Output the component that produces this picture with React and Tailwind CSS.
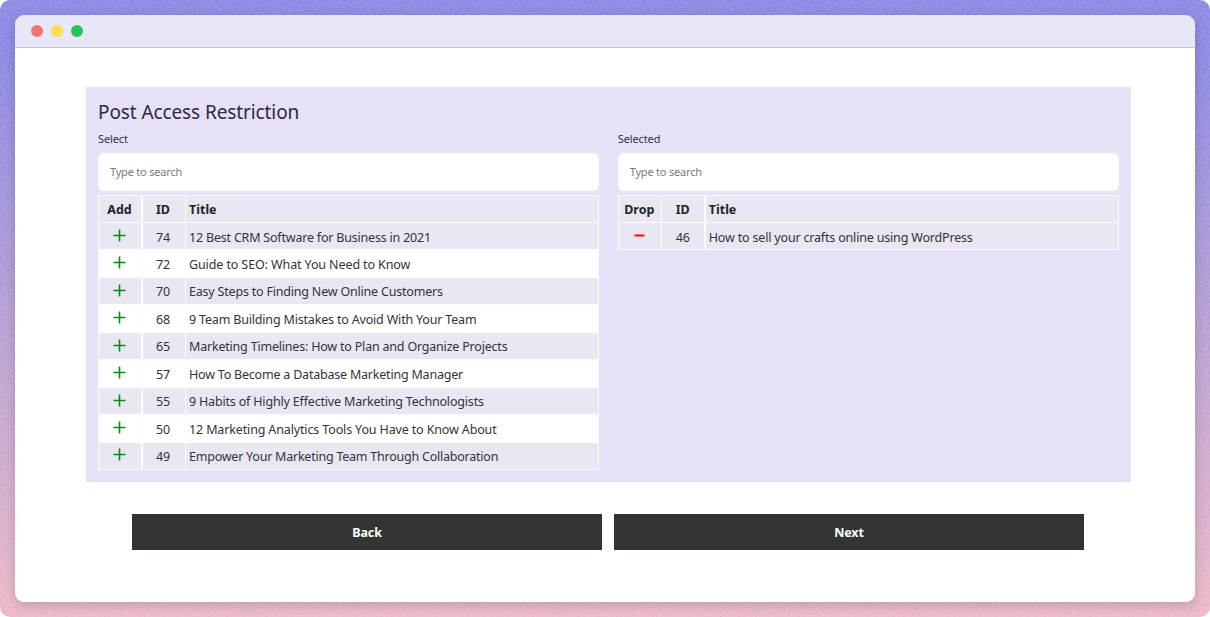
const posts = [
  { id: 74, title: '12 Best CRM Software for Business in 2021', tracking: 'tracking-[-0.2px]' },
  { id: 72, title: 'Guide to SEO: What You Need to Know', tracking: 'tracking-[-0.11px]' },
  { id: 70, title: 'Easy Steps to Finding New Online Customers', tracking: 'tracking-[-0.2px]' },
  { id: 68, title: '9 Team Building Mistakes to Avoid With Your Team', tracking: 'tracking-[-0.18px]' },
  { id: 65, title: 'Marketing Timelines: How to Plan and Organize Projects', tracking: 'tracking-[-0.2px]' },
  { id: 57, title: 'How To Become a Database Marketing Manager', tracking: 'tracking-[-0.21px]' },
  { id: 55, title: '9 Habits of Highly Effective Marketing Technologists', tracking: 'tracking-[-0.18px]' },
  { id: 50, title: '12 Marketing Analytics Tools You Have to Know About', tracking: 'tracking-[-0.14px]' },
  { id: 49, title: 'Empower Your Marketing Team Through Collaboration', tracking: 'tracking-[-0.23px]' },
];

const selectedPosts = [
  { id: 46, title: 'How to sell your crafts online using WordPress', tracking: 'tracking-[-0.18px]' },
];

function ActionIcon({ drop }) {
  return drop ? (
    <svg className="mb-[2px] mr-[1px] h-[13px] w-[13px]" viewBox="0 0 13 13" aria-hidden="true">
      <path d="M1.5 6.5H11.5" stroke="#ff0808" strokeWidth="2" />
    </svg>
  ) : (
    <svg className="mb-[2px] mr-[1px] h-[13px] w-[13px]" viewBox="0 0 13 13" aria-hidden="true">
      <path d="M0.5 6.5H12.5M6.5 0.5V12.5" stroke="#088a12" strokeWidth="1.6" />
    </svg>
  );
}

function PostTable({ label, action, rows, drop }) {
  return (
    <section className="w-[501px]">
      <div className="h-[22px] text-[11px] leading-[16px] tracking-[-0.12px] text-[#35324a]">{label}</div>
      <input
        className="block h-[38px] w-full rounded-[6px] bg-white px-3 pb-[2px] text-[11px] tracking-[-0.2px] text-[#333] placeholder-[#777a80] outline-none"
        placeholder="Type to search"
      />
      <div className="mt-1 grid grid-cols-[42px_42px_1fr] gap-x-[1.5px] gap-y-[1.44px] bg-[#fcfbfe] p-px text-[12.5px] text-[#33333b]">
        <div className="flex h-[26px] items-center justify-center bg-[#e9e7f2] pr-px pt-[2px] font-bold text-[#212529]">{action}</div>
        <div className="flex h-[26px] items-center justify-center bg-[#e9e7f2] pr-px pt-[2px] font-bold text-[#212529]">ID</div>
        <div className="flex h-[26px] items-center bg-[#e9e7f2] pl-[3px] pt-[2px] font-bold text-[#212529]">Title</div>
        {rows.map((row, i) => {
          const bg = i % 2 === 0 ? 'bg-[#e9e7f2]' : 'bg-white';
          return (
            <div key={row.id} className="contents">
              <div className={`flex h-[26px] items-center justify-center ${bg}`}>
                <ActionIcon drop={drop} />
              </div>
              <div className={`flex h-[26px] items-center justify-center pr-px pt-[3px] tracking-[-0.2px] ${bg}`}>{row.id}</div>
              <div className={`flex h-[26px] items-center whitespace-nowrap pl-[3px] pt-[3px] ${bg}`}>
                <span className={row.tracking}>{row.title}</span>
              </div>
            </div>
          );
        })}
      </div>
    </section>
  );
}

export default function App() {
  return (
    <div className="h-[617px] w-[1210px] bg-white font-['Noto_Sans',sans-serif]">
      <div className="relative h-full overflow-hidden rounded-[10px] bg-linear-to-b from-[#8e8ae3] from-8% via-[#b6a0d4] via-50% to-[#ecb9c8] p-[15px]">
        <svg className="absolute inset-0 h-full w-full opacity-25 mix-blend-soft-light" aria-hidden="true">
          <filter id="grain" x="0" y="0" width="100%" height="100%">
            <feTurbulence type="fractalNoise" baseFrequency="0.5" numOctaves="3" stitchTiles="stitch" />
            <feColorMatrix type="matrix" values="1.6 0 0 0 -0.4  1.6 0 0 0 -0.4  1.6 0 0 0 -0.4  0 0 0 0 1" />
          </filter>
          <rect width="100%" height="100%" filter="url(#grain)" />
        </svg>
        <div className="relative flex h-[587px] flex-col overflow-hidden rounded-[9px] shadow-[0_4px_12px_rgba(0,0,0,0.16)]">
          <header className="flex h-[33px] shrink-0 items-center gap-2 border-b border-[#c6c3d1] bg-[#e8e7f8] px-4">
            <span className="h-3 w-3 rounded-full bg-[#f87171]" />
            <span className="h-3 w-3 rounded-full bg-[#fde047]" />
            <span className="h-3 w-3 rounded-full bg-[#22c55e]" />
          </header>
          <main className="flex-1 bg-white pl-[71px] pt-[38.5px]">
            <div className="h-[395.5px] w-[1044.5px] bg-[#e6e1f7] px-3 pt-[10.5px]">
              <h1 className="h-[34px] text-[19px] leading-[30px] tracking-[-0.1px] text-[#2d2946]">Post Access Restriction</h1>
              <div className="flex gap-[19px]">
                <PostTable label="Select" action="Add" rows={posts} />
                <PostTable label="Selected" action="Drop" rows={selectedPosts} drop />
              </div>
            </div>
            <div className="ml-[46px] mt-8 flex gap-3 text-[12.5px] font-bold text-white">
              <button className="h-[35.5px] w-[470px] bg-[#323633] pt-[3px] tracking-[-0.1px]">Back</button>
              <button className="h-[35.5px] w-[470px] bg-[#323633] pt-[3px] tracking-[-0.1px]">Next</button>
            </div>
          </main>
        </div>
      </div>
    </div>
  );
}
